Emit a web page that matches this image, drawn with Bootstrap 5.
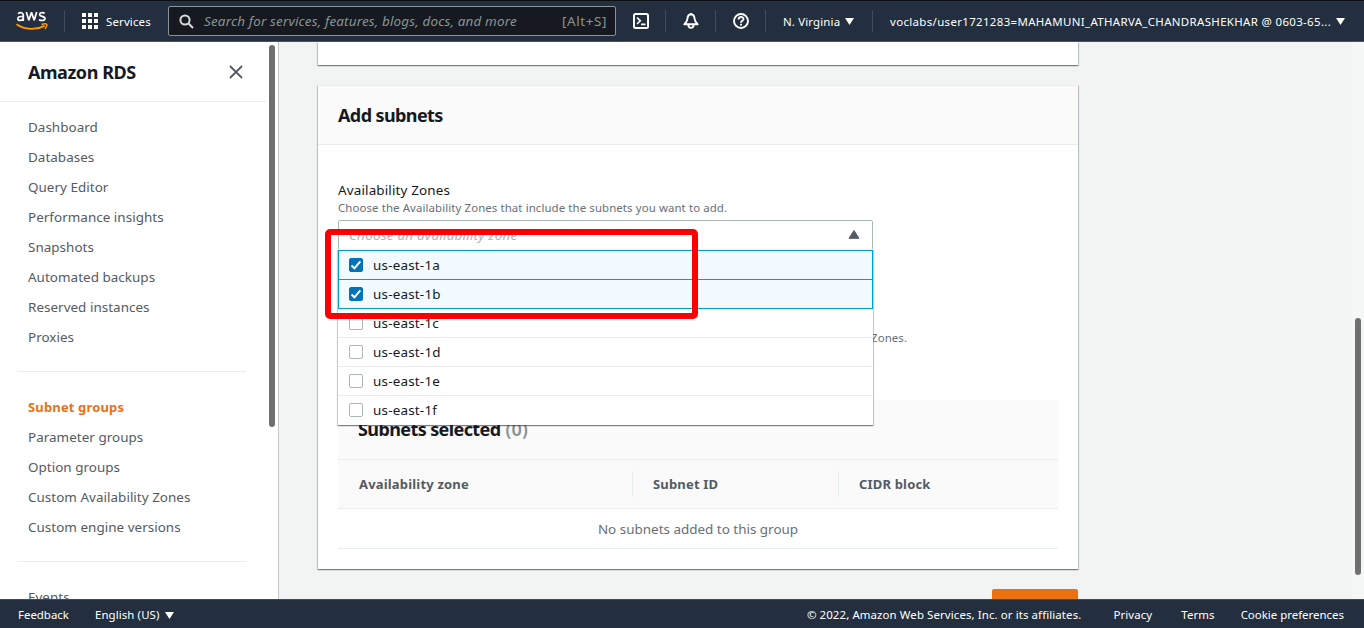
<!DOCTYPE html>
<html lang="en">
<head>
<meta charset="utf-8">
<meta name="viewport" content="width=device-width, initial-scale=1">
<title>Amazon RDS - Add subnets</title>
<link href="https://cdn.jsdelivr.net/npm/bootstrap@5.3.0/dist/css/bootstrap.min.css" rel="stylesheet">
<style>
body{font-family:"Noto Sans",sans-serif;font-size:13.45px;letter-spacing:.1px;line-height:20px;color:#16191f;background:#f2f3f3;height:628px}
.topnav{height:42px;background:#232f3e;border-top:1px solid #0b0f14;border-bottom:1px solid #4b555f;font-size:11.45px;color:#fff;letter-spacing:.15px}
.navtext{line-height:12px;padding-top:2px}
.services{width:45px;margin-left:8px}
.launcher{margin-left:17px}
.caret{margin-left:5px}
.vsep{width:1px;height:22px;background:#414d5c}
.searchbox{width:448px;height:30px;margin-left:17px;padding:0 8px 0 10px;background:#16191f;border:1px solid #879596;border-radius:2px;color:#879596;font-size:13.45px;letter-spacing:.17px}
.searchbox em{padding-left:10px}
.altkey{letter-spacing:.6px}
.toolcell{width:50px;height:22px;border-right:1px solid #414d5c}
.toolcell svg{margin-left:1px}
.region{width:107px;height:22px;padding-left:17px;border-right:1px solid #414d5c}
.account{padding-left:17px;letter-spacing:.35px}
.sidenav{width:279px;background:#fff;border-right:1px solid #c3c9cb}
.sidehead{width:266px;height:60px;padding:0 23px 0 28px;border-bottom:1px solid #eaeded}
.titletext{font-size:18px;font-weight:700;letter-spacing:-.6px;line-height:22px;margin:0}
.sidehead .titletext{letter-spacing:-.45px}
.count{color:#879196;font-weight:600;letter-spacing:.1px;padding-left:1px}
.sidelist{color:#545b64;padding:10px 0 0 28px;width:266px;letter-spacing:.03px}
.sidelist a{display:block;height:30px;line-height:30px;color:#545b64;text-decoration:none}
.sidelist a.current{color:#ec7211;font-weight:700;font-size:13px;letter-spacing:.15px}
.divide{height:1px;background:#eaeded;margin:19px 20px 20px -11px}
.sidetrack{width:12px;padding:3px 0 0 3px}
.sidethumb{width:6px;height:382px;border-radius:3px;background:#6f6f6f}
.pagetrack{width:12px;background:#f5f6f6;padding:276px 0 0 3px}
.pagethumb{width:6px;height:257px;border-radius:3px;background:#6f6f6f}
.content{padding-left:39px}
.panel{width:760px;background:#fff;box-shadow:0 1px 1px rgba(0,28,36,.3),1px 1px 1px rgba(0,28,36,.18),-1px 1px 1px rgba(0,28,36,.18)}
.panel-prev{height:23px}
.panel-main{height:484px;margin-top:20px}
.panelhead{height:60px;padding:0 20px 1px;background:#fafafa;border-top:1px solid #eaeded;border-bottom:1px solid #eaeded}
.panelbody{padding:35px 20px 0}
.fieldlabel{letter-spacing:.15px}
.hint{font-size:11.45px;line-height:16px;color:#687078;letter-spacing:.09px}
.selectwrap{width:535px}
.selectbox{height:30px;margin-top:4px;padding:0 12px 0 10px;border:1px solid #aab7b8;border-radius:2px;color:#aab7b8;letter-spacing:.23px}
.selectbox svg{margin-bottom:1px}
.options{top:29px;left:0;width:535px;padding-top:1px;z-index:2;background:#fff;box-shadow:0 1px 1px rgba(0,28,36,.3),1px 1px 1px rgba(0,28,36,.18),-1px 1px 1px rgba(0,28,36,.18)}
.option{height:29px;padding-left:11px;border-bottom:1px solid #eaeded;gap:10px;letter-spacing:.2px}
.option:last-child{border-bottom-color:#fff}
.option.chosen{background:#f1faff;border:1px solid #00a1c9;border-top:0;padding-left:10px}
.option.chosen:first-child{height:30px;border-top:1px solid #00a1c9}
.tick{width:14px;height:14px;border:1px solid #aab7b8;border-radius:2px;background:#fff}
.chosen .tick{border-color:#0073bb;background:#0073bb}
.redbox{left:-13px;top:9px;width:373px;height:90px;border:6px solid #f00;border-radius:5px;z-index:3}
.moretext{margin:80px 0 54px 533px}
.subtable{width:720px}
.subhead{height:60px;padding:0 20px 2px;background:#fafafa;border-bottom:1px solid #eaeded}
.colrow{height:49px;background:#fafafa;border-bottom:1px solid #eaeded;color:#545b64;font-weight:700;font-size:13px;letter-spacing:.18px}
.colrow div{height:26px;line-height:26px}
.c-zone{width:295px;padding-left:21px;border-right:1px solid #eaeded}
.c-id{width:206px;padding-left:20px;border-right:1px solid #eaeded}
.c-cidr{padding-left:20px}
.emptyrow{height:40px;border-bottom:1px solid #eaeded;color:#687078;letter-spacing:0}
.createbtn{width:86px;height:30px;margin:20px 0 0 674px;background:#ec7211;border-radius:2px 2px 0 0}
.footbar{height:29px;background:#232f3e;border-top:1px solid #3f4a57;padding:2px 20px 0 18px;color:#fff;font-size:11.45px}
.footbar .tight{letter-spacing:0}
.f-lang{margin-left:26px}
.f-privacy{margin-left:32px}
.f-terms{margin-left:29px}
.f-cookie{margin-left:26px}
svg{display:block;flex:none}
</style>
<script src="https://cdn.jsdelivr.net/npm/bootstrap@5.3.0/dist/js/bootstrap.bundle.min.js"></script>
</head>
<body class="d-flex flex-column overflow-hidden">
<header class="topnav d-flex align-items-center flex-shrink-0 text-nowrap">
  <svg class="ms-3" width="32" height="20" viewBox="0 0 32 20">
    <g fill="none" stroke="#fff" stroke-width="1.7">
      <path d="M2 2.600C4.400 1 7.300 1.400 7.300 4.300V10M7.300 5.700C4 5.200 1.800 5.700 1.800 7.700C1.800 10 6 10.200 7.300 7.300"/>
      <path d="M10.300 1L12.800 9.200L15.500 1.400L18.200 9.200L20.700 1" stroke-linejoin="bevel"/>
      <path d="M28.700 2.300C26.500 1.200 23.600 1.500 23.600 3.400C23.600 5.900 29 4.800 29 7.500C29 9.800 25.400 9.900 23 8.700"/>
    </g>
    <path d="M.5 13.200C9 19 20 19.300 28.600 14.800" fill="none" stroke="#f90" stroke-width="1.900"/>
    <path d="M25.500 13.500C28 12.600 30 12.700 30.700 13.300C31 14.500 30 16.900 28.900 18" fill="none" stroke="#f90" stroke-width="1.500"/>
  </svg>
  <div class="vsep ms-3"></div>
  <svg class="launcher" width="16" height="16" viewBox="0 0 16 16" fill="#fff"><path d="M0 0h4v4H0zM6 0h4v4H6zM12 0h4v4h-4zM0 6h4v4H0zM6 6h4v4H6zM12 6h4v4h-4zM0 12h4v4H0zM6 12h4v4H6zM12 12h4v4h-4z"/></svg>
  <span class="services navtext">Services</span>
  <div class="searchbox d-flex align-items-center">
    <svg width="15" height="15" viewBox="0 0 15 15" fill="none" stroke="#d5dbdb" stroke-width="2"><circle cx="6" cy="6" r="4.600"/><path d="M9.300 9.300L14 14"/></svg>
    <em>Search for services, features, blogs, docs, and more</em>
    <span class="ms-auto altkey">[Alt+S]</span>
  </div>
  <div class="toolcell d-flex align-items-center justify-content-center"><svg width="16" height="16" viewBox="0 0 16 16" fill="none" stroke="#fff" stroke-width="2"><rect x="1" y="1" width="14" height="14" rx="1.500"/><path d="M4 4.500L7.300 7.800L4 11M8 11.300h4.500" stroke-width="1.700"/></svg></div>
  <div class="toolcell d-flex align-items-center justify-content-center"><svg width="16" height="16" viewBox="0 0 16 16" fill="none" stroke="#fff" stroke-width="1.900" stroke-linejoin="round"><path d="M8 1.300C5.500 1.600 4.600 3.300 4.500 5.500C4.400 8 3.200 9.300 1.300 11.300H14.700C12.800 9.300 11.600 8 11.500 5.500C11.400 3.300 10.500 1.600 8 1.300ZM8 0V2M5.400 12C5.400 15.800 10.600 15.800 10.600 12"/></svg></div>
  <div class="toolcell d-flex align-items-center justify-content-center"><svg width="16" height="16" viewBox="0 0 16 16" fill="none" stroke="#fff" stroke-width="1.900"><circle cx="8" cy="8" r="7"/><path d="M5.600 6.500C5.600 3.200 10.500 3.300 10.500 6C10.500 7.700 8 7.700 8 9.700M8 10.700V12.500"/></svg></div>
  <div class="region d-flex align-items-center"><span class="navtext">N. Virginia</span><svg class="caret" width="9" height="7" viewBox="0 0 9 7"><path d="M0 0H9L4.500 7z" fill="#fff"/></svg></div>
  <div class="account d-flex align-items-center"><span class="navtext">voclabs/user1721283=MAHAMUNI_ATHARVA_CHANDRASHEKHAR @ 0603-65...</span><svg class="caret" width="9" height="7" viewBox="0 0 9 7"><path d="M0 0H9L4.500 7z" fill="#fff"/></svg></div>
</header>

<div class="d-flex flex-grow-1 overflow-hidden">
  <aside class="sidenav d-flex flex-shrink-0 overflow-hidden">
    <div class="flex-shrink-0">
      <div class="sidehead d-flex align-items-center justify-content-between">
        <h2 class="titletext">Amazon RDS</h2>
        <svg width="14" height="14" viewBox="0 0 14 14" stroke="#545b64" stroke-width="1.800"><path d="M1 1L13 13M13 1L1 13"/></svg>
      </div>
      <nav class="sidelist">
        <a href="#">Dashboard</a><a href="#">Databases</a><a href="#">Query Editor</a><a href="#">Performance insights</a><a href="#">Snapshots</a><a href="#">Automated backups</a><a href="#">Reserved instances</a><a href="#">Proxies</a>
        <div class="divide"></div>
        <a href="#" class="current">Subnet groups</a><a href="#">Parameter groups</a><a href="#">Option groups</a><a href="#">Custom Availability Zones</a><a href="#">Custom engine versions</a>
        <div class="divide"></div>
        <a href="#">Events</a>
      </nav>
    </div>
    <div class="sidetrack"><div class="sidethumb"></div></div>
  </aside>

  <main class="content flex-grow-1">
    <section class="panel panel-prev"></section>
    <section class="panel panel-main">
      <div class="panelhead d-flex align-items-center"><h2 class="titletext">Add subnets</h2></div>
      <div class="panelbody">
        <div class="fieldlabel">Availability Zones</div>
        <div class="hint">Choose the Availability Zones that include the subnets you want to add.</div>
        <div class="selectwrap position-relative">
          <div class="selectbox d-flex align-items-center justify-content-between"><em>Choose an availability zone</em>
            <svg width="12" height="9" viewBox="0 0 12 9"><path d="M6 .5L11 8.300H1z" fill="#545b64" stroke="#545b64" stroke-linejoin="round"/></svg></div>
          <div class="options position-absolute">
            <div class="option chosen d-flex align-items-center"><span class="tick"><svg width="12" height="12" viewBox="0 0 12 12" fill="none" stroke="#fff" stroke-width="2"><path d="M1.500 6.500L4.500 9.300L10.300 2.300"/></svg></span>us-east-1a</div>
            <div class="option chosen d-flex align-items-center"><span class="tick"><svg width="12" height="12" viewBox="0 0 12 12" fill="none" stroke="#fff" stroke-width="2"><path d="M1.500 6.500L4.500 9.300L10.300 2.300"/></svg></span>us-east-1b</div>
            <div class="option d-flex align-items-center"><span class="tick"></span>us-east-1c</div>
            <div class="option d-flex align-items-center"><span class="tick"></span>us-east-1d</div>
            <div class="option d-flex align-items-center"><span class="tick"></span>us-east-1e</div>
            <div class="option d-flex align-items-center"><span class="tick"></span>us-east-1f</div>
          </div>
          <div class="redbox position-absolute"></div>
        </div>
        <div class="hint moretext">Zones.</div>
        <div class="subtable">
          <div class="subhead d-flex align-items-center"><h3 class="titletext">Subnets selected <span class="count">(0)</span></h3></div>
          <div class="colrow d-flex align-items-center"><div class="c-zone">Availability zone</div><div class="c-id">Subnet ID</div><div class="c-cidr">CIDR block</div></div>
          <div class="emptyrow d-flex align-items-center justify-content-center">No subnets added to this group</div>
        </div>
      </div>
    </section>
    <div class="createbtn"></div>
  </main>
  <div class="pagetrack flex-shrink-0"><div class="pagethumb"></div></div>
</div>

<footer class="footbar d-flex align-items-center flex-shrink-0 text-nowrap">
  <span class="tight">Feedback</span>
  <span class="f-lang">English (US)</span>
  <svg class="caret" width="9" height="7" viewBox="0 0 9 7"><path d="M0 0H9L4.500 7z" fill="#fff"/></svg>
  <span class="ms-auto">© 2022, Amazon Web Services, Inc. or its affiliates.</span>
  <span class="f-privacy">Privacy</span>
  <span class="f-terms">Terms</span>
  <span class="tight f-cookie">Cookie preferences</span>
</footer>
</body>
</html>
